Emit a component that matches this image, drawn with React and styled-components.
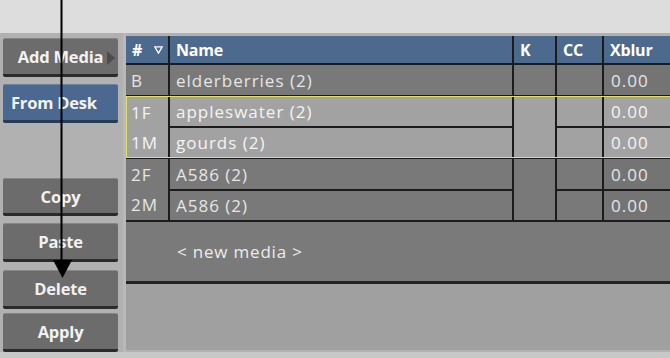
import React from 'react'
import styled, { createGlobalStyle } from 'styled-components'

const GlobalStyle = createGlobalStyle`
  html, body {
    margin: 0;
    padding: 0;
    background: #dcdcdc;
  }
  body {
    font-family: "Open Sans", "DejaVu Sans", sans-serif;
  }
`

const groups = [
    { ids: ['B'], names: ['elderberries (2)'], tone: 'dark' },
    { ids: ['1F', '1M'], names: ['appleswater (2)', 'gourds (2)'], tone: 'light', selected: true },
    { ids: ['2F', '2M'], names: ['A586 (2)', 'A586 (2)'], tone: 'dark' },
]

const App = () => {
    let row = 2
    const cells = []
    groups.forEach((g, gi) => {
        const start = row
        const span = g.ids.length
        cells.push(
            <Cell key={`id${gi}`} $row={start} $span={span} $col={1} $tone={g.tone} $pad={5}>
                <Stack>
                    {g.ids.map((id) => <StackLine key={id}>{id}</StackLine>)}
                </Stack>
            </Cell>
        )
        g.names.map((name, i) => cells.push(
            <Cell key={`n${gi}${i}`} $row={start + i} $span={1} $col={2} $tone={g.tone} $pad={6}>{name}</Cell>
        ))
        cells.push(<Cell key={`k${gi}`} $row={start} $span={span} $col={3} $tone={g.tone} />)
        g.names.map((name, i) => cells.push(
            <Cell key={`c${gi}${i}`} $row={start + i} $span={1} $col={4} $tone={g.tone} />
        ))
        g.names.map((name, i) => cells.push(
            <Cell key={`x${gi}${i}`} $row={start + i} $span={1} $col={5} $tone={g.tone === 'dark' ? 'xblur' : g.tone} $pad={7}>0.00</Cell>
        ))
        if (g.selected) {
            cells.push(<Selection key={`s${gi}`} $row={start} $span={span} />)
        }
        row += span
    })

    return (
        <Screen>
            <GlobalStyle />
            <TopStrip />
            <Main>
                <Sidebar>
                    <Button $top={5}>
                        Add Media
                        <MenuMarker viewBox="0 0 8 14" width="8" height="14">
                            <polygon points="0,0 8,7 0,14" fill="#4d4d4d" />
                        </MenuMarker>
                    </Button>
                    <Button $top={7} $blue>From Desk</Button>
                    <Button $top={55}>Copy</Button>
                    <Button $top={7}>Paste</Button>
                    <Button $top={8}>Delete</Button>
                    <Button $top={4}>Apply</Button>
                </Sidebar>
                <TableArea>
                    <Grid>
                        <HeadCell $col={1}>
                            <span>#</span>
                            <svg width="9" height="8" viewBox="0 0 9 8">
                                <polygon points="0.8,0.8 8.2,0.8 4.5,7.2" fill="none" stroke="#ffffff" strokeWidth="1.3" />
                            </svg>
                        </HeadCell>
                        <HeadCell $col={2}>Name</HeadCell>
                        <HeadCell $col={3}>K</HeadCell>
                        <HeadCell $col={4}>CC</HeadCell>
                        <HeadCell $col={5}>Xblur</HeadCell>
                        {cells}
                    </Grid>
                    <NewMedia>&lt; new media &gt;</NewMedia>
                    <Empty />
                </TableArea>
            </Main>
            <Arrow width="80" height="290" viewBox="0 0 80 290">
                <line x1="61.5" y1="0" x2="61.5" y2="262" stroke="#000" strokeWidth="2" />
                <polygon points="53,260 72,260 62.5,278" fill="#000" />
            </Arrow>
        </Screen>
    )
}

const Screen = styled.div`
  position: relative;
  width: 670px;
  height: 358px;
  overflow: hidden;
  display: flex;
  flex-direction: column;
  background: #c8c8c8;
`

const TopStrip = styled.div`
  height: 33px;
  background: #dddddd;
  flex: none;
`

const Main = styled.div`
  display: flex;
  height: 319px;
  background: #b1b1b1;
`

const Sidebar = styled.div`
  width: 115px;
  padding: 0 5px 0 3px;
  border-right: 3px solid #b9b9b9;
  display: flex;
  flex-direction: column;
`

const Button = styled.div`
  position: relative;
  box-sizing: border-box;
  height: 39px;
  margin-top: ${props => props.$top}px;
  background: ${props => props.$blue ? '#4a6890' : '#6c6c6c'};
  border-top: 1px solid ${props => props.$blue ? '#6683a8' : '#868686'};
  border-bottom: 3px solid ${props => props.$blue ? '#2a3a50' : '#2b2b2b'};
  border-radius: 2px;
  color: #f2f2f2;
  font-weight: 700;
  font-size: 16.5px;
  letter-spacing: -0.2px;
  display: flex;
  align-items: center;
  justify-content: ${props => props.$blue ? 'flex-start' : 'center'};
  padding-left: ${props => props.$blue ? '8px' : '0'};
`

const MenuMarker = styled.svg`
  position: absolute;
  right: 3px;
  top: 12px;
`

const TableArea = styled.div`
  flex: 1;
  display: flex;
  flex-direction: column;
  padding-top: 3px;
  padding-bottom: 2px;
`

const Grid = styled.div`
  display: grid;
  grid-template-columns: 42px 342px 41px 45px 1fr;
  grid-template-rows: 27px 30px 29px 29px 30px 29px;
  gap: 2px;
  background: #1c1c1c;
  padding-bottom: 2px;
`

const HeadCell = styled.div`
  grid-row: 1;
  grid-column: ${props => props.$col};
  background: #4c6a8e;
  color: #ffffff;
  font-weight: 700;
  font-size: 16px;
  letter-spacing: -0.2px;
  display: flex;
  align-items: center;
  justify-content: space-between;
  padding: 0 5px 0 6px;
  svg {
    margin-top: 1px;
  }
`

const tones = {
    dark: '#797979',
    xblur: '#747474',
    light: '#a2a2a2',
}

const Cell = styled.div`
  grid-row: ${props => props.$row} / span ${props => props.$span};
  grid-column: ${props => props.$col};
  background: ${props => tones[props.$tone]};
  color: ${props => props.$tone === 'light' ? '#f4f4f4' : '#e6e6e6'};
  font-size: 17px;
  letter-spacing: 1px;
  display: flex;
  align-items: center;
  padding-left: ${props => props.$pad || 0}px;
  white-space: nowrap;
`

const Stack = styled.div`
  display: flex;
  flex-direction: column;
  align-self: stretch;
  width: 100%;
`

const StackLine = styled.div`
  display: flex;
  align-items: center;
  flex: 1;
`

const Selection = styled.div`
  position: relative;
  z-index: 2;
  grid-row: ${props => props.$row} / span ${props => props.$span};
  grid-column: 1 / -1;
  margin: -1px 0;
  border: 1px solid #e2e062;
  border-right: none;
  pointer-events: none;
`

const NewMedia = styled.div`
  height: 59px;
  background: #7a7a7a;
  border-bottom: 3px solid #232323;
  color: #ececec;
  font-size: 17px;
  letter-spacing: 0.8px;
  display: flex;
  align-items: center;
  padding-left: 51px;
`

const Empty = styled.div`
  flex: 1;
  background: #a0a0a0;
`

const Arrow = styled.svg`
  position: absolute;
  left: 0;
  top: 0;
  pointer-events: none;
`

export default App
